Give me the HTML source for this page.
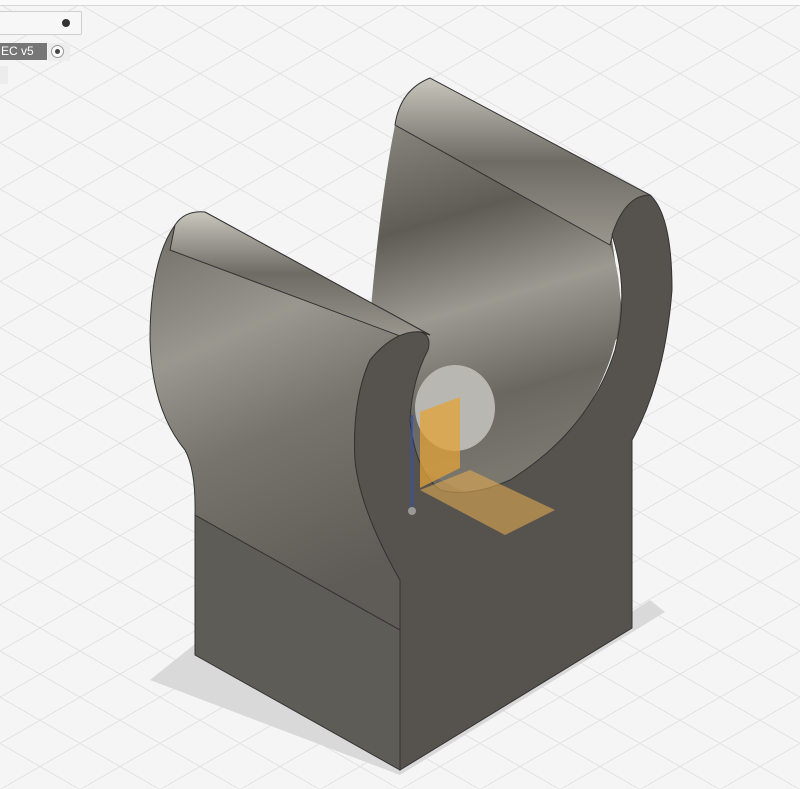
<!DOCTYPE html>
<html><head><style>
html,body{margin:0;padding:0;width:800px;height:789px;overflow:hidden;background:#f4f4f4;font-family:"Liberation Sans",sans-serif}
#bg{position:absolute;inset:0;background:
repeating-linear-gradient(30deg,transparent 0 39px,#e2e2e2 39px 40px),
repeating-linear-gradient(-30deg,transparent 0 39px,#e2e2e2 39px 40px),#f5f5f5}
</style></head><body>
<div id="bg"></div>
<div style="position:absolute;left:0;top:0;width:800px;height:5px;background:#fafafa;border-bottom:1px solid #d8d8d8"></div>
<div style="position:absolute;left:-2px;top:11px;width:82px;height:22px;background:#f7f7f7;border:1px solid #cfcfcf;border-radius:2px"></div>
<div style="position:absolute;left:62px;top:19px;width:8px;height:8px;background:#333;border-radius:50%"></div>
<div style="position:absolute;left:0;top:43px;width:46px;height:17px;background:#777;color:#fff;font-size:12px;line-height:17px;padding-left:1px">EC v5</div>
<div style="position:absolute;left:48px;top:43px;width:22px;height:18px;background:#eee"></div>
<div style="position:absolute;left:51px;top:45px;width:11px;height:11px;border:1px solid #999;border-radius:50%;background:#fafafa"></div>
<div style="position:absolute;left:55px;top:49px;width:5px;height:5px;background:#444;border-radius:50%"></div>
<div style="position:absolute;left:0;top:66px;width:8px;height:18px;background:#ececec"></div>
<svg width="800" height="789" style="position:absolute;left:0;top:0">
<defs>
<linearGradient id="g1" x1="0" y1="0" x2="0.3" y2="1">
<stop offset="0" stop-color="#6d6a64"/><stop offset="0.35" stop-color="#9a978f"/><stop offset="0.6" stop-color="#77746d"/><stop offset="1" stop-color="#5f5c57"/></linearGradient>
<linearGradient id="g2" x1="0" y1="0" x2="0.2" y2="1">
<stop offset="0" stop-color="#8a877f"/><stop offset="0.3" stop-color="#5f5c56"/><stop offset="0.55" stop-color="#9c9991"/><stop offset="0.8" stop-color="#6a6761"/><stop offset="1" stop-color="#7a776f"/></linearGradient>
<linearGradient id="g3" x1="0" y1="0" x2="0" y2="1">
<stop offset="0" stop-color="#c9c6bd"/><stop offset="0.5" stop-color="#6e6b65"/><stop offset="1" stop-color="#9a968d"/></linearGradient>
</defs>
<polygon points="150,680 200,640 400,760 650,600 665,612 400,775" fill="#d9d9d9"/>
<polygon points="375,300 612,240 625,330 470,500 400,600 340,460 360,380" fill="#6a6760"/>
<polygon points="195,515 195,655 400,770 400,630" fill="#5e5c57" stroke="#333" stroke-width="1"/>
<path d="M395,125 L610,245 Q630,300 610,360 Q570,470 470,495 L420,470 Q400,420 405,370 L370,320 Q380,200 395,125 Z" fill="url(#g2)"/>
<path d="M395,125 Q400,90 430,78 L650,195 Q620,200 610,245 Z" fill="url(#g3)" stroke="#333"/>
<path d="M175,225 Q150,260 150,340 Q152,410 185,450 Q196,470 195,515 L400,630 L400,580 Q360,510 355,460 Q352,400 370,360 Q395,330 420,332 L430,335 L205,212 Z" fill="url(#g1)" stroke="#333"/>
<path d="M175,225 Q185,210 205,212 L430,335 Q420,328 400,336 L170,250 Z" fill="url(#g3)" stroke="#333"/>
<ellipse cx="455" cy="408" rx="40" ry="43" fill="#b9b7b1"/>
<path d="M400,770 L632,628 L632,440 Q665,380 672,290 Q672,215 650,195 Q625,195 612,235 Q630,290 615,350 Q590,430 510,480 Q470,498 440,490 Q415,470 410,420 Q412,380 428,350 Q432,335 420,332 Q395,330 370,360 Q352,400 355,460 Q360,510 400,580 Z" fill="#56534e" stroke="#333"/>
<polygon points="420,412 460,397 460,468 420,488" fill="#e3a33a" opacity="0.75"/>
<polygon points="420,490 470,470 555,510 505,535" fill="#e0a850" opacity="0.6"/>
<line x1="412" y1="415" x2="412" y2="510" stroke="#3050c0" stroke-width="1.5"/>
<circle cx="412" cy="511" r="4" fill="#999"/>
</svg>
</body></html>
